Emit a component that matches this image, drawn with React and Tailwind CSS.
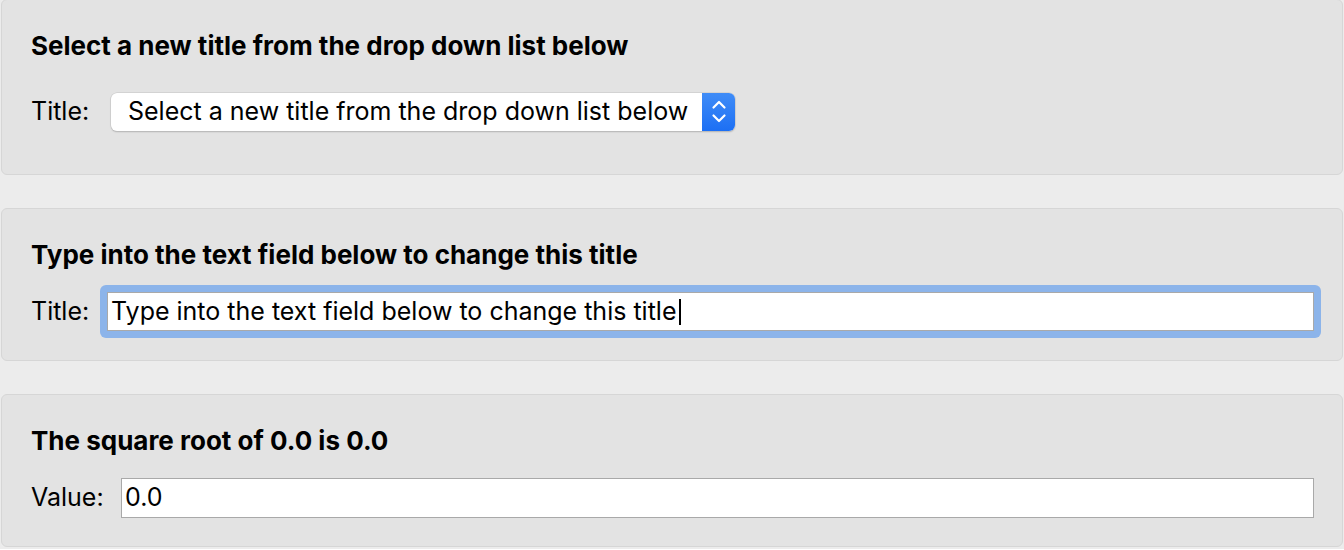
import React from "react";

const font = { fontFamily: "Inter, 'Noto Sans', sans-serif" };

function Panel({ title, children, className }) {
  return (
    <div
      className={
        "rounded-[6px] border border-[#d6d6d6] bg-[#e3e3e3] pl-[29px] pt-[31px] " + className
      }
    >
      <div className="text-[26px] leading-[30px] font-bold text-black">{title}</div>
      {children}
    </div>
  );
}

function Stepper() {
  return (
    <div className="w-[33px] h-full rounded-r-[6px] bg-gradient-to-b from-[#3f8cf7] to-[#1c6ff4] flex items-center justify-center">
      <svg width="16" height="28" viewBox="0 0 16 28" fill="none" stroke="white" strokeWidth="2.2" strokeLinecap="round" strokeLinejoin="round">
        <path d="M2.5 9.5 L8 4 L13.5 9.5" />
        <path d="M2.5 17.5 L8 23 L13.5 17.5" />
      </svg>
    </div>
  );
}

export default function App() {
  return (
    <div className="min-h-[550px] bg-[#ececec] px-px text-black" style={font}>
      <Panel title="Select a new title from the drop down list below" className="h-[176px] -mt-px">
        <div className="flex items-center mt-[32px] h-[38px]">
          <div className="w-[80px] text-[25px]">Title:</div>
          <div className="flex items-stretch h-[38px] w-[624px] rounded-[6px] bg-white shadow-[0_0_0_0.5px_#c4c4c4,0_1px_1.5px_rgba(0,0,0,0.25)]">
            <div className="flex-1 pl-[17px] flex items-center text-[25px] whitespace-nowrap overflow-hidden">
              Select a new title from the drop down list below
            </div>
            <Stepper />
          </div>
        </div>
      </Panel>

      <Panel title="Type into the text field below to change this title" className="h-[153px] mt-[33px] pr-[21px]">
        <div className="flex items-center mt-[15px]">
          <div className="w-[69px] text-[25px]">Title:</div>
          <div className="flex-1 rounded-[6px] bg-[#8cb4ea] p-[7px]">
            <div className="h-[39px] border border-[#a9a9a9] bg-white flex items-center pl-[3px] text-[25px] whitespace-nowrap">
              Type into the text field below to change this title
              <span className="inline-block w-[2px] h-[26px] bg-black ml-[3px]" />
            </div>
          </div>
        </div>
      </Panel>

      <Panel title="The square root of 0.0 is 0.0" className="h-[153px] mt-[33px] pr-[28px]">
        <div className="flex items-center mt-[22px]">
          <div className="w-[90px] text-[25px]">Value:</div>
          <div className="flex-1 h-[40px] border border-[#a9a9a9] bg-white flex items-center pl-[3px] text-[25px]">
            0.0
          </div>
        </div>
      </Panel>
    </div>
  );
}
